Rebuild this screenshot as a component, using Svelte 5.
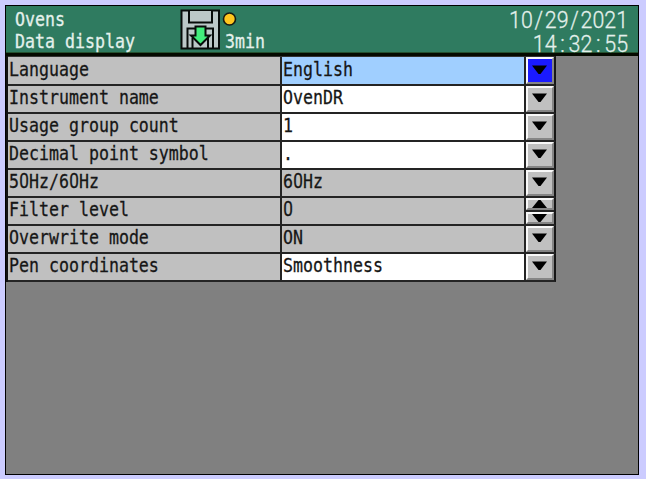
<script>
  const rows = [
    { label: 'Language', value: 'English', state: 'selected' },
    { label: 'Instrument name', value: 'OvenDR', state: 'editable' },
    { label: 'Usage group count', value: '1', state: 'editable' },
    { label: 'Decimal point symbol', value: '.', state: 'editable' },
    { label: '50Hz/60Hz', value: '60Hz', state: 'locked' },
    { label: 'Filter level', value: '0', state: 'locked', spinner: true },
    { label: 'Overwrite mode', value: 'ON', state: 'locked' },
    { label: 'Pen coordinates', value: 'Smoothness', state: 'editable' }
  ];
  // Zeros and separators get their own cell so that they keep the fixed pitch.
  const zeros = (text) => text.split(/(0)/).filter(Boolean);
  const marks = (text) => text.split(/([/:])/).filter(Boolean);
</script>

{#snippet mono(text)}
  <span class="mono">{#each zeros(text) as part}{#if part === '0'}<span class="zero">0</span>{:else}{part}{/if}{/each}</span>
{/snippet}

{#snippet clock(text)}
  <div class="clock">{#each marks(text) as part}{#if part === '/' || part === ':'}<span class="mark">{part}</span>{:else}{part}{/if}{/each}</div>
{/snippet}

<div class="page">
  <div class="screen">
    <header>
      <div class="titles">
        <div>{@render mono('Ovens')}</div>
        <div>{@render mono('Data display')}</div>
      </div>
      <svg class="disk" width="58" height="42" viewBox="0 0 58 42">
        <path d="M1.500 1.500H39V39.500H1.500Z" fill="#bcc8c8" stroke="#080c0a" stroke-width="2" />
        <path d="M9 2V13.500H32V2" fill="#bcc8c8" stroke="#080c0a" stroke-width="2" />
        <path d="M7.500 39V19.500H33V39" fill="none" stroke="#080c0a" stroke-width="2" />
        <path d="M12.500 39V29M28 39V29" stroke="#080c0a" stroke-width="2" />
        <path d="M15.500 17.500H25.500V26.500H30L20.500 36L11 26.500H15.500Z" fill="#42ed7c" stroke="#080c0a" stroke-width="2" />
        <circle cx="49.500" cy="10" r="6" fill="#ffc61e" stroke="#171b12" stroke-width="1.600" />
      </svg>
      <div class="interval">{@render mono('3min')}</div>
      <div class="time">
        {@render clock('10/29/2021')}
        {@render clock('14:32:55')}
      </div>
    </header>

    <div class="table">
      {#each rows as row}
        <div class="row">
          <div class="label">{@render mono(row.label)}</div>
          <div class="value {row.state}">{@render mono(row.value)}</div>
          {#if row.spinner}
            <div class="spinner">
              <button aria-label="Increase"><svg width="16" height="8" viewBox="0 0 16 8"><path d="M0 8L6.500 0H8.500L15 8Z" /></svg></button>
              <button aria-label="Decrease"><svg width="16" height="8" viewBox="0 0 16 8"><path d="M0 0H15L8.500 8H6.500Z" /></svg></button>
            </div>
          {:else}
            <button class:active={row.state === 'selected'} aria-label="Open list"><svg width="16" height="9" viewBox="0 0 16 9"><path d="M0 .5H15L8.500 9H6.500Z" /></svg></button>
          {/if}
        </div>
      {/each}
    </div>
  </div>
</div>

<style>
  .page {
    box-sizing: border-box;
    width: 646px;
    height: 479px;
    padding: 5px 7px 4px 5px;
    background: #ccccff;
    overflow: hidden;
  }
  .screen {
    box-sizing: border-box;
    height: 470px;
    border: 1px solid #000;
    background: #808080;
    overflow: hidden;
  }
  header {
    box-sizing: border-box;
    display: flex;
    height: 50px;
    border-bottom: 3px solid #050a00;
    background: #2f7b60;
    color: #e4f1ec;
    box-shadow: inset 0 -1px #24512f;
  }
  .titles {
    width: 174px;
    padding: 3px 0 0 9px;
    box-sizing: border-box;
  }
  .titles > div {
    height: 22px;
  }
  .disk {
    flex: none;
    margin-top: 3px;
  }
  .interval {
    padding: 25px 0 0 0;
    margin-left: -13px;
  }
  .time {
    margin-left: auto;
    padding: 2px 10px 0 0;
    text-align: right;
  }
  .mono {
    display: block;
    height: 22px;
    font: 16.600px/22px "DejaVu Sans Mono", monospace;
    white-space: pre;
    -webkit-text-stroke: 0.250px currentColor;
    transform: scaleY(1.140);
  }
  .zero {
    display: inline-block;
    width: 10px;
    line-height: 16px;
    text-align: center;
    font-family: Roboto, sans-serif;
    font-size: 17.200px;
  }
  .clock {
    height: 24px;
    font: 300 21.400px/24px Roboto, sans-serif;
    white-space: pre;
    -webkit-text-stroke: 0.250px currentColor;
    transform: scaleY(1.150);
  }
  .mark {
    display: inline-block;
    width: 12px;
    text-align: center;
  }
  .table {
    width: 550px;
    border-left: 2px solid #111;
    box-sizing: border-box;
  }
  .row {
    display: grid;
    grid-template-columns: 274px 244px 28px;
    box-sizing: border-box;
    width: 548px;
    height: 28px;
    border-right: 2px solid #161616;
    border-bottom: 2px solid #242424;
  }
  .row:first-child {
    height: 30px;
    border-top: 1px solid #333;
  }
  .row:first-child .mono {
    padding-top: 1px;
  }
  .label,
  .value {
    padding: 1px 0 0 1px;
    border-right: 2px solid #242424;
    color: #161616;
    background: #c0c0c0;
    overflow: hidden;
  }
  .value.selected {
    background: #a0cfff;
  }
  .value.editable {
    background: #fff;
  }
  button {
    box-sizing: border-box;
    display: flex;
    align-items: center;
    justify-content: center;
    width: 28px;
    min-height: 0;
    margin: 0;
    padding: 0 1px 3px 0;
    border: 2px solid;
    border-color: #f8f8f8 #858585 #858585 #f8f8f8;
    border-radius: 0;
    background: #c0c0c0;
  }
  button.active {
    background: #1a1aff;
  }
  svg {
    display: block;
  }
  .spinner {
    display: grid;
    grid-template-rows: 12px 12px;
    gap: 2px;
    width: 28px;
    background: #242424;
  }
  .spinner button {
    padding: 0 1px 0 0;
  }
</style>
